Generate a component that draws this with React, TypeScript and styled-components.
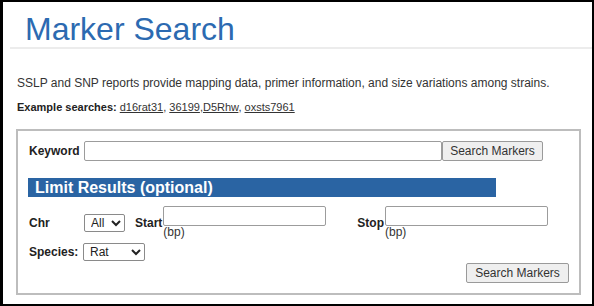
import styled, { createGlobalStyle } from "styled-components";

const GlobalStyle = createGlobalStyle`
  html, body {
    margin: 0;
    padding: 0;
    background: #fff;
  }
  body {
    font-family: "Liberation Sans", Arial, sans-serif;
    color: #222;
  }
`;

const Frame = styled.div`
  box-sizing: border-box;
  width: 594px;
  height: 306px;
  border-style: solid;
  border-color: #000;
  border-width: 2px 2px 2px 3px;
  background: #fff;
  display: flex;
  flex-direction: column;
  overflow: hidden;
`;

const Header = styled.div`
  margin-left: 7px;
  padding: 9px 0 0 15px;
  border-bottom: 2px solid #ececec;
`;

const Title = styled.h1`
  margin: 0;
  font-size: 32px;
  line-height: 36px;
  font-weight: normal;
  color: #2c6ab1;
`;

const Intro = styled.p`
  margin: 27px 0 0 14px;
  font-size: 12px;
  line-height: 14px;
  color: #333;
`;

const Examples = styled.div`
  margin: 11px 0 0 14px;
  font-size: 11px;
  line-height: 13px;
  color: #333;

  b {
    color: #222;
  }
  a {
    color: #333;
    text-decoration: underline;
  }
`;

const SearchBox = styled.form`
  margin: 15px 0 0 13px;
  width: 565px;
  box-sizing: border-box;
  border: 2px solid #bdbdbd;
  padding: 10px;
  display: flex;
  flex-direction: column;
`;

const Row = styled.div<{ $mt?: number }>`
  display: flex;
  align-items: center;
  margin-top: ${(p) => p.$mt ?? 0}px;
`;

const Label = styled.label<{ $w?: number; $ml?: number }>`
  font-size: 12px;
  font-weight: bold;
  color: #222;
  padding-left: 1px;
  width: ${(p) => (p.$w ? `${p.$w}px` : "auto")};
  margin-left: ${(p) => p.$ml ?? 0}px;
  flex-shrink: 0;
`;

const TextInput = styled.input<{ $w: number }>`
  box-sizing: border-box;
  width: ${(p) => p.$w}px;
  height: 20px;
  border: 1px solid #9c9c9c;
  border-radius: 2px;
  padding: 1px 3px;
  margin: 0;
  font: 12px "Liberation Sans", Arial, sans-serif;
`;

const Button = styled.button<{ $w: number }>`
  box-sizing: border-box;
  width: ${(p) => p.$w}px;
  height: 20px;
  margin: 0;
  padding: 0;
  background: #efefef;
  border: 1px solid #9a9a9a;
  border-radius: 2px;
  font: 12px "Liberation Sans", Arial, sans-serif;
  color: #333;
`;

const LimitBar = styled.div`
  margin-top: 17px;
  width: 468px;
  height: 19px;
  box-sizing: border-box;
  padding-left: 7px;
  background: #2a64a3;
  color: #fff;
  font-size: 16px;
  font-weight: bold;
  line-height: 19px;
`;

const Select = styled.select<{ $w: number; $h: number }>`
  box-sizing: border-box;
  width: ${(p) => p.$w}px;
  height: ${(p) => p.$h}px;
  margin: 0;
  padding: 0 0 0 2px;
  border: 1px solid #8a8a8a;
  border-radius: 2px;
  background: #fff;
  color: #222;
  font: 12px "Liberation Sans", Arial, sans-serif;
`;

const RangeCell = styled.div`
  display: flex;
  flex-direction: column;
  margin-left: 1px;
`;

const Unit = styled.span`
  font-size: 12px;
  line-height: 13px;
  color: #333;
`;

const ButtonRow = styled.div`
  display: flex;
  justify-content: flex-end;
  margin-top: 2px;
`;

export default function App() {
  return (
    <>
      <GlobalStyle />
      <Frame>
        <Header>
          <Title>Marker Search</Title>
        </Header>
        <Intro>
          SSLP and SNP reports provide mapping data, primer information, and size variations among strains.
        </Intro>
        <Examples>
          <b>Example searches:</b> <a href="#">d16rat31</a>, <a href="#">36199</a>,
          <a href="#">D5Rhw</a>, <a href="#">oxsts7961</a>
        </Examples>
        <SearchBox onSubmit={(e) => e.preventDefault()}>
          <Row>
            <Label $w={55}>Keyword</Label>
            <TextInput $w={358} />
            <Button $w={101}>Search Markers</Button>
          </Row>
          <LimitBar>Limit Results (optional)</LimitBar>
          <Row $mt={9}>
            <Label $w={55}>Chr</Label>
            <Select $w={41} $h={18} defaultValue="All">
              <option>All</option>
            </Select>
            <Label $ml={9}>Start</Label>
            <RangeCell>
              <TextInput $w={163} />
              <Unit>(bp)</Unit>
            </RangeCell>
            <Label $ml={30}>Stop</Label>
            <RangeCell>
              <TextInput $w={163} />
              <Unit>(bp)</Unit>
            </RangeCell>
          </Row>
          <Row $mt={4}>
            <Label $w={54}>Species:</Label>
            <Select $w={62} $h={18} defaultValue="Rat">
              <option>Rat</option>
            </Select>
          </Row>
          <ButtonRow>
            <Button $w={103}>Search Markers</Button>
          </ButtonRow>
        </SearchBox>
      </Frame>
    </>
  );
}
